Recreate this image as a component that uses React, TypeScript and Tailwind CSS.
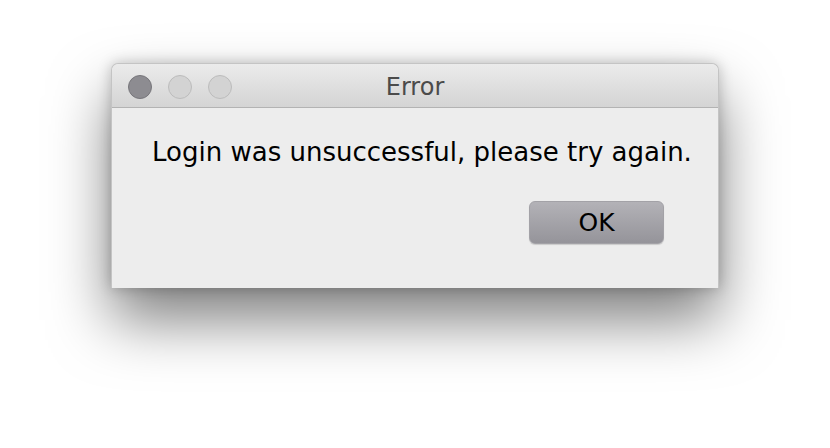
import React from 'react'

const font = { fontFamily: '"DejaVu Sans", "Liberation Sans", sans-serif' }

export default function App() {
  return (
    <div className="w-[830px] h-[448px] bg-white pt-[63px] pl-[111px]" style={font}>
      {/* dialog window */}
      <div className="w-[608px] h-[225px] flex flex-col rounded-t-[7px] bg-[#ededed] border border-[#c4c4c4] border-b-0 shadow-[0_32px_60px_rgba(0,0,0,0.5),0_0_14px_rgba(0,0,0,0.22)]">
        {/* title bar */}
        <div className="relative h-[44px] shrink-0 flex items-center justify-center rounded-t-[7px] bg-gradient-to-b from-[#ebebeb] to-[#d4d4d4] border-b border-[#b3b3b3]">
          <div className="absolute left-[16px] top-[11px] flex gap-[16px]">
            <div className="w-[24px] h-[24px] rounded-full bg-[#8d8c91] border border-[#77767b]" />
            <div className="w-[24px] h-[24px] rounded-full bg-[#d3d3d3] border border-[#bcbcbc]" />
            <div className="w-[24px] h-[24px] rounded-full bg-[#d3d3d3] border border-[#bcbcbc]" />
          </div>
          <span className="text-[24px] text-[#4b4b4b] leading-none mt-[2px]">Error</span>
        </div>

        {/* body */}
        <div className="flex-1 flex flex-col">
          <p className="mt-[29px] pl-[14px] text-center text-[26px] leading-[30px] text-black">
            Login was unsuccessful, please try again.
          </p>
          <div className="flex justify-end pr-[54px] mt-[34px]">
            <button className="w-[135px] h-[43px] rounded-[6px] border border-[#a3a2a7] bg-gradient-to-b from-[#b3b2b7] to-[#95949a] text-[25px] leading-none text-black shadow-[0_1px_1px_rgba(0,0,0,0.15)]">
              OK
            </button>
          </div>
        </div>
      </div>
    </div>
  )
}
